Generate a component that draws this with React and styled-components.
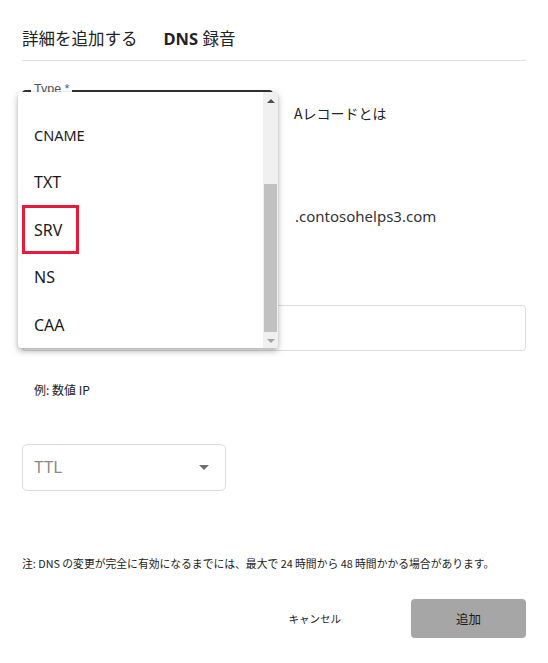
import React from "react";
import styled, { createGlobalStyle, css } from "styled-components";

const GlobalStyle = createGlobalStyle`
  body {
    margin: 0;
    background: #ffffff;
    font-family: "Noto Sans", "Noto Sans CJK JP", sans-serif;
    color: #1f1f1f;
  }
`;

const Page = styled.div`
  width: 548px;
  height: 663px;
  box-sizing: border-box;
  padding: 0 22px;
  display: flex;
  flex-direction: column;
`;

const Header = styled.div`
  height: 61px;
  border-bottom: 1px solid #e1e1e1;
  display: flex;
  align-items: center;
  padding-top: 16px;
  box-sizing: border-box;
  font-size: 16.5px;
  color: #222;
`;

const HeaderPart = styled.span`
  margin-right: ${p => p.gap || 0}px;
  font-weight: ${p => (p.bold ? 700 : 400)};
`;

const Row = styled.div`
  display: grid;
  grid-template-columns: 251px 1fr;
  column-gap: 21px;
  align-items: center;
  margin-top: ${p => p.top}px;
`;

const Field = styled.div`
  position: relative;
  height: 46px;
  box-sizing: border-box;
  border: 1px solid #dcdcdc;
  border-radius: 4px;
  ${p => p.focused && css`
    border: 2px solid #333;
  `}
`;

const FloatLabel = styled.span`
  position: absolute;
  left: 7px;
  top: -10px;
  padding: 0 3px;
  background: #fff;
  font-size: 12.5px;
  color: #555;
  line-height: 15px;
  font-family: "Liberation Sans", sans-serif;
`;

const Star = styled.span`
  color: #2b6cb0;
`;

const SideText = styled.div`
  font-size: 14px;
  color: #222;
  font-family: "Noto Sans CJK JP", sans-serif;
`;

const Suffix = styled.div`
  font-size: 15px;
  color: #333;
  font-family: "Noto Sans", sans-serif;
  padding-left: 1px;
`;

const Popover = styled.div`
  position: absolute;
  left: -6px;
  top: 0px;
  width: 260px;
  height: 256px;
  background: #fff;
  border-radius: 3px;
  box-shadow: 0 3px 6px rgba(0, 0, 0, 0.3), 0 0 2px rgba(0, 0, 0, 0.12);
  display: flex;
  overflow: hidden;
  z-index: 5;
`;

const List = styled.ul`
  flex: 1;
  list-style: none;
  margin: 0;
  padding: 19px 0 0 0;
`;

const Item = styled.li`
  height: 47.5px;
  display: flex;
  align-items: center;
  padding-left: 16px;
  font-size: ${p => p.size || 16}px;
  color: #1a1a1a;
`;

const Marked = styled.span`
  display: flex;
  align-items: center;
  box-sizing: border-box;
  height: 49px;
  width: 57px;
  margin-left: -12px;
  padding-left: 9px;
  border: 3px solid #e81a3b;
`;

const Scrollbar = styled.div`
  width: 15px;
  background: #f0f0f0;
  display: flex;
  flex-direction: column;
  align-items: center;
`;

const Arrow = styled.div`
  width: 0;
  height: 0;
  border-left: 4px solid transparent;
  border-right: 4px solid transparent;
  margin: 7px 0;
  ${p => p.up
    ? css`border-bottom: 4px solid ${p.dim ? "#a3a3a3" : "#505050"};`
    : css`border-top: 4px solid ${p.dim ? "#a3a3a3" : "#505050"};`}
`;

const Track = styled.div`
  flex: 1;
  width: 100%;
  display: flex;
  flex-direction: column;
  padding: 0 1px;
  box-sizing: border-box;
`;

const Thumb = styled.div`
  margin-top: 74px;
  height: 148px;
  background: #c1c1c1;
`;

const WideField = styled.div`
  margin-top: 66px;
  height: 46px;
  box-sizing: border-box;
  border: 1px solid #dcdcdc;
  border-radius: 4px;
`;

const Hint = styled.div`
  margin-top: 30px;
  padding-left: 12px;
  font-size: 12px;
  color: #222;
  font-family: "Noto Sans CJK JP", sans-serif;
`;

const Select = styled.div`
  margin-top: 46px;
  width: 204px;
  height: 47px;
  box-sizing: border-box;
  border: 1px solid #dcdcdc;
  border-radius: 5px;
  display: flex;
  align-items: center;
  justify-content: space-between;
  padding: 0 16px 0 11px;
  font-size: 16px;
  color: #8a8a8a;
  font-family: "Liberation Sans", sans-serif;
`;

const Caret = styled.span`
  width: 0;
  height: 0;
  border-left: 5px solid transparent;
  border-right: 5px solid transparent;
  border-top: 5px solid #6e6e6e;
`;

const Note = styled.div`
  margin-top: 64px;
  font-size: 10.8px;
  color: #222;
  font-family: "Noto Sans CJK JP", sans-serif;
  white-space: nowrap;
`;

const Actions = styled.div`
  margin-top: 28px;
  display: flex;
  justify-content: flex-end;
  align-items: center;
`;

const TextButton = styled.button`
  background: none;
  border: none;
  padding: 0;
  margin-right: 70px;
  font-size: 10.5px;
  color: #222;
  font-family: "Noto Sans CJK JP", sans-serif;
`;

const PrimaryButton = styled.button`
  width: 115px;
  height: 39px;
  border: none;
  border-radius: 4px;
  background: #a6a6a6;
  font-size: 12.5px;
  color: #1a1a1a;
  font-family: "Noto Sans CJK JP", sans-serif;
`;

const options = [
  { label: "CNAME", size: 14.5 },
  { label: "TXT" },
  { label: "SRV", marked: true },
  { label: "NS" },
  { label: "CAA" },
];

export default function App() {
  return (
    <>
      <GlobalStyle />
      <Page>
        <Header>
          <HeaderPart gap={26}>詳細を追加する</HeaderPart>
          <HeaderPart bold>DNS</HeaderPart>
          <HeaderPart>&nbsp;録音</HeaderPart>
        </Header>

        <Row top={29}>
          <Field focused>
            <FloatLabel>
              Type <Star>*</Star>
            </FloatLabel>
            <Popover>
              <List>
                {options.map(o => (
                  <Item key={o.label} size={o.size}>
                    {o.marked ? <Marked>{o.label}</Marked> : o.label}
                  </Item>
                ))}
              </List>
              <Scrollbar>
                <Arrow up />
                <Track>
                  <Thumb />
                </Track>
                <Arrow dim />
              </Scrollbar>
            </Popover>
          </Field>
          <SideText>Aレコードとは</SideText>
        </Row>

        <Row top={57}>
          <Field />
          <Suffix>.contosohelps3.com</Suffix>
        </Row>

        <WideField />
        <Hint>例: 数値 IP</Hint>

        <Select>
          <span>TTL</span>
          <Caret />
        </Select>

        <Note>
          注: DNS の変更が完全に有効になるまでには、最大で 24 時間から 48 時間かかる場合があります。
        </Note>

        <Actions>
          <TextButton>キャンセル</TextButton>
          <PrimaryButton>追加</PrimaryButton>
        </Actions>
      </Page>
    </>
  );
}
